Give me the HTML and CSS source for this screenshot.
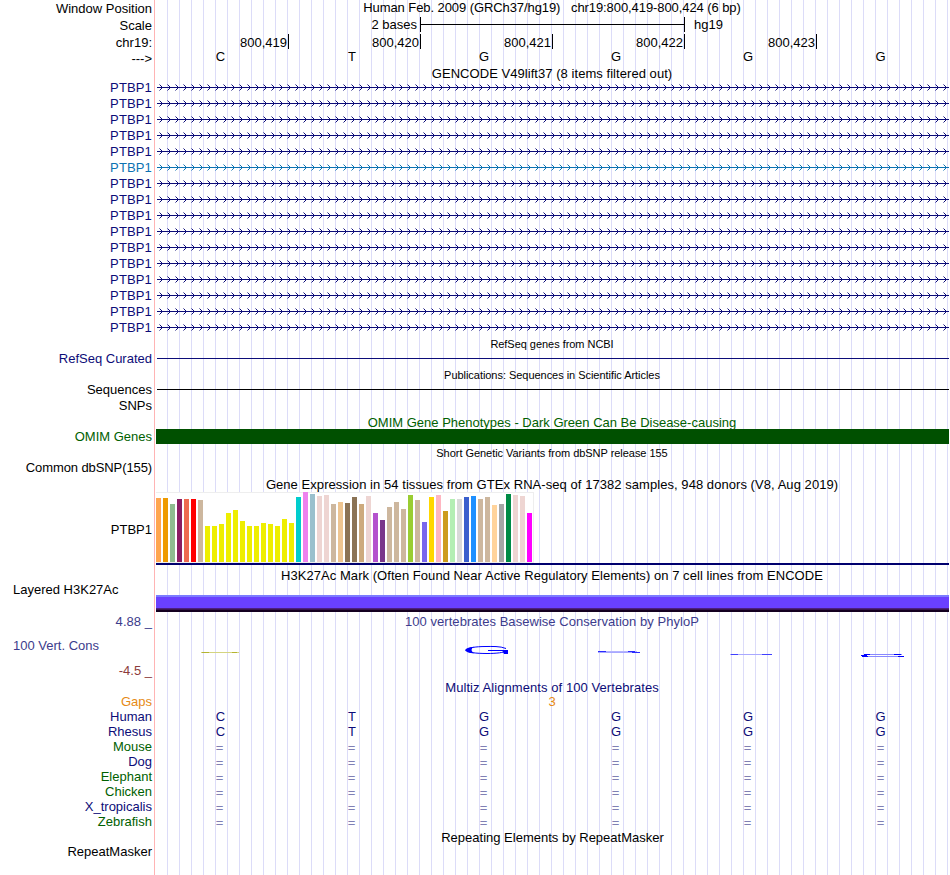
FILE: index.html
```html
<!DOCTYPE html>
<html lang="en">
<head>
    <meta charset="UTF-8">
    <title>Human hg19 chr19:800,419-800,424</title>
    <link rel="stylesheet" href="styles.css">
</head>
<body>

    <div class="browser">
        <div class="row position">
            <div class="label">Window Position</div>
            <div class="title">Human Feb. 2009 (GRCh37/hg19) &nbsp; chr19:800,419-800,424 (6 bp)</div>
        </div>
        <div class="row scale">
            <div class="label">Scale</div>
            <div class="track scale-track">
                <span class="scale-size">2 bases</span>
                <span class="scale-bar"></span>
                <span class="scale-db">hg19</span>
            </div>
        </div>
        <div class="row ruler">
            <div class="label">chr19:</div>
            <div class="track ticks">
                <span>800,419</span><span>800,420</span><span>800,421</span><span>800,422</span><span>800,423</span>
            </div>
        </div>
        <div class="row strand">
            <div class="label">---&gt;</div>
            <div class="track bases">
                <span>C</span><span>T</span><span>G</span><span>G</span><span>G</span><span>G</span>
            </div>
        </div>

        <div class="row gencode-title"><div class="title">GENCODE V49lift37 (8 items filtered out)</div></div>
        <div id="genes"></div>

        <div class="row"><div class="title small">RefSeq genes from NCBI</div></div>
        <div class="row line-row navy">
            <div class="label">RefSeq Curated</div>
            <div class="track"><div class="line"></div></div>
        </div>

        <div class="row"><div class="title small">Publications: Sequences in Scientific Articles</div></div>
        <div class="row line-row">
            <div class="label">Sequences</div>
            <div class="track"><div class="line"></div></div>
        </div>
        <div class="row snps"><div class="label">SNPs</div></div>

        <div class="row omim-title green"><div class="title">OMIM Gene Phenotypes - Dark Green Can Be Disease-causing</div></div>
        <div class="row omim green">
            <div class="label">OMIM Genes</div>
            <div class="track omim-bar"></div>
        </div>

        <div class="row"><div class="title small">Short Genetic Variants from dbSNP release 155</div></div>
        <div class="row dbsnp"><div class="label">Common dbSNP(155)</div></div>

        <div class="row gtex-title"><div class="title">Gene Expression in 54 tissues from GTEx RNA-seq of 17382 samples, 948 donors (V8, Aug 2019)</div></div>
        <div class="row gtex">
            <div class="label">PTBP1</div>
            <div class="track gtex-track"><div class="bars" id="bars"></div></div>
        </div>

        <div class="row h3k-title"><div class="title">H3K27Ac Mark (Often Found Near Active Regulatory Elements) on 7 cell lines from ENCODE</div></div>
        <div class="row h3k">
            <div class="label left">Layered H3K27Ac</div>
            <div class="track h3k-bar"></div>
        </div>

        <div class="row cons-title blue">
            <div class="label">4.88 _</div>
            <div class="title">100 vertebrates Basewise Conservation by PhyloP</div>
        </div>
        <div class="row cons">
            <div class="label cons-label">
                <span class="cons-name">100 Vert. Cons</span>
                <span class="cons-min">-4.5 _</span>
            </div>
            <div class="track">
                <svg class="logos" width="793" height="51" viewBox="156 629 793 51" fill="none">
                    <path d="M201 652.5H239" stroke="#d4d480"/>
                    <path d="M202 652.5H209M232 652.5H237" stroke="#b4b430"/>
                    <path d="M506 648.5C500 646 492 646.500 486 646.500C475 646.500 467 648 467 650.200C467 652.500 476 653.500 487 653.500C497 653.500 504 652.500 506 651" stroke="#00f"/>
                    <path d="M465 650.200Q466 647.500 474 646.800Q469 650 474 653.300Q466 652.600 465 650.200ZM502 650H508V654H504Z" fill="#00f"/>
                    <path d="M488 650.500H507" stroke="#00f"/>
                    <path d="M599 651.500H637" stroke="#b4b4ff"/>
                    <path d="M598 652.500H640" stroke="#a8a8ff"/>
                    <path d="M598 651.500H606M628 651.500H635M632 652.500H640" stroke="#2a2aff"/>
                    <path d="M730 654.500H772" stroke="#a8a8ff"/>
                    <path d="M731 654.500H738M762 654.500H772" stroke="#4040ff"/>
                    <path d="M864 654.500H902M863 656.500H903" stroke="#8888ff"/>
                    <path d="M861 655.500H867M862 656.500H868M864 654.500H870M894 654.500H901M898 656.500H904" stroke="#00f"/>
                </svg>
            </div>
        </div>

        <div class="row multiz-title navy"><div class="title">Multiz Alignments of 100 Vertebrates</div></div>
        <div class="row species gaps">
            <div class="label">Gaps</div>
            <div class="title">3</div>
        </div>
        <div id="species"></div>

        <div class="row repeat-title"><div class="title">Repeating Elements by RepeatMasker</div></div>
        <div class="row repeat"><div class="label">RepeatMasker</div></div>
    </div>

    <svg width="0" height="0" class="defs">
        <defs>
            <pattern id="chevrons-navy" class="navy" x="1" width="8" height="16" patternUnits="userSpaceOnUse">
                <path d="M4 7h1v1h-1zM4 9h1v1h-1zM3 6h1v1h-1zM3 10h1v1h-1z" fill="currentColor"/>
                <path d="M2 5h1v1h-1zM2 11h1v1h-1z" fill="currentColor" opacity=".5"/>
            </pattern>
            <pattern id="chevrons-lightblue" class="lightblue" x="1" width="8" height="16" patternUnits="userSpaceOnUse">
                <path d="M4 7h1v1h-1zM4 9h1v1h-1zM3 6h1v1h-1zM3 10h1v1h-1z" fill="currentColor"/>
                <path d="M2 5h1v1h-1zM2 11h1v1h-1z" fill="currentColor" opacity=".5"/>
            </pattern>
        </defs>
    </svg>

    <script>
        // GENCODE transcripts, one of them is non-coding (lighter blue)
        let genes = "";
        for (let i = 0; i < 16; i++) {
            const color = i === 5 ? "lightblue" : "navy";
            genes += `<div class="row gene ${color}">
                <div class="label">PTBP1</div>
                <svg class="track" width="793" height="16">
                    <rect x="1" y="8" width="792" height="1" fill="currentColor"/>
                    <rect x="1" width="792" height="16" fill="url(#chevrons-${color})"/>
                </svg>
            </div>`;
        }
        document.getElementById("genes").innerHTML = genes;

        // GTEx tissues: bar height, color
        const tissues = [
            [64, "#ffa54f"], [64, "#ee9a00"], [58, "#8fbc8f"], [63, "#8b1c62"], [63, "#ee6a50"], [63, "#ff0000"], [62, "#cdb79e"],
            [36, "#eeee00"], [36, "#eeee00"], [38, "#eeee00"], [49, "#eeee00"], [52, "#eeee00"], [41, "#eeee00"], [36, "#eeee00"],
            [36, "#eeee00"], [39, "#eeee00"], [38, "#eeee00"], [36, "#eeee00"], [43, "#eeee00"], [39, "#eeee00"],
            [65, "#00cdcd"], [70, "#ee82ee"], [68, "#9ac0cd"], [66, "#eed5d2"], [67, "#eed5d2"], [58, "#cdb79e"], [60, "#eec591"],
            [59, "#8b7355"], [65, "#8b7355"], [58, "#cdaa7d"], [66, "#eed5d2"], [49, "#b452cd"], [42, "#7a378b"], [55, "#cdb79e"],
            [60, "#cdb79e"], [53, "#cdb79e"], [67, "#9acd32"], [62, "#cdb79e"], [40, "#7a67ee"], [65, "#ffd700"], [67, "#ffb6c1"],
            [51, "#cd9b1d"], [63, "#b4eeb4"], [63, "#d9d9d9"], [65, "#3a5fcd"], [66, "#1e90ff"], [63, "#cdb79e"], [65, "#cdb79e"],
            [57, "#ffd39b"], [58, "#a6a6a6"], [68, "#008b45"], [67, "#eed5d2"], [66, "#eed5d2"], [49, "#ff00ff"]
        ];
        document.getElementById("bars").innerHTML = tissues
            .map(([h, c]) => `<i style="height:${h}px;background:${c}"></i>`).join("");

        const species = [
            ["Human", "navy"], ["Rhesus", "navy"], ["Mouse", "green"], ["Dog", "navy"],
            ["Elephant", "green"], ["Chicken", "green"], ["X_tropicalis", "navy"], ["Zebrafish", "green"]
        ];
        document.getElementById("species").innerHTML = species.map(([name, color], i) => {
            const bases = i < 2 ? "CTGGGG" : "======";
            return `<div class="row species ${color}">
                <div class="label">${name}</div>
                <div class="track bases ${i < 2 ? "match" : "gap"}">${[...bases].map(b => `<span>${b}</span>`).join("")}</div>
            </div>`;
        }).join("");
    </script>

</body>
</html>
```
FILE: styles.css
```css
body { margin: 0; background: #fff; font-family: "Liberation Sans", Arial, sans-serif; font-size: 13px; color: #000; }

/* guide lines every 12px, red line between labels and tracks */
.browser {
    width: 949px; height: 875px; overflow: hidden;
    background:
        linear-gradient(#ffb4b4, #ffb4b4) 154px 0 / 1px 100% no-repeat,
        repeating-linear-gradient(to right, transparent 0 11px, #dcdcf8 11px 12px) 156px 0 / 793px 100% no-repeat;
}
.defs { display: block; }

.row { display: grid; grid-template-columns: 152px 793px; column-gap: 4px; height: 16px; line-height: 16px; white-space: nowrap; }
.label { grid-column: 1; text-align: right; }
.label.left { text-align: left; padding-left: 13px; }
.title { grid-column: 2; text-align: center; padding-right: 1px; }
.track { grid-column: 2; display: block; }
.small { font-size: 11px; line-height: 18px; letter-spacing: -0.04px; }

.navy { color: #0c0c78; }
.lightblue { color: #0c72b2; }
.green { color: #006000; }
.blue { color: #3c3c8c; }

.position { line-height: 18px; }
.position .title { line-height: 16px; letter-spacing: -0.08px; }
.scale { height: 17px; line-height: 20px; }
.scale-track { display: flex; line-height: 15px; padding-top: 1px; }
.scale-size { width: 261px; padding-right: 3px; text-align: right; }
.scale-bar { width: 263px; height: 15px; border: solid #000; border-width: 0 1px; background: linear-gradient(#000, #000) 0 7px / 100% 1px no-repeat; }
.scale-db { padding-left: 9px; }
.ruler { height: 17px; line-height: 19px; }
.ticks { display: flex; padding-top: 1px; }
.ticks span { box-sizing: border-box; width: 132px; height: 15px; line-height: 18px; padding-right: 1px; text-align: right; border-right: 1px solid #000; }
.ticks span:first-child { width: 133px; }
.bases { display: grid; grid-template-columns: repeat(6, 132px); text-align: center; }
.bases span { padding-right: 4px; }
.bases span:first-child, .bases span:last-child { padding-right: 3px; }
.strand { line-height: 18px; }
.strand .bases { line-height: 13px; }

.gencode-title { height: 13px; line-height: 15px; letter-spacing: 0.05px; }
.gene { line-height: 18px; }
.gene .label { letter-spacing: 0.15px; }
.line-row { height: 15px; line-height: 15px; }
.line { height: 1px; margin: 7px 0 0 1px; background: currentColor; }
.snps { line-height: 18px; }

.omim-title { line-height: 19px; }
.omim { height: 15px; line-height: 15px; }
.omim-bar { background: #005000; }
.dbsnp .label { letter-spacing: -0.1px; }
.gtex-title { line-height: 17px; letter-spacing: 0.055px; }
.gtex { height: 73px; line-height: 76px; }
.gtex-track { box-sizing: border-box; height: 73px; border-bottom: 2px solid #00006e; }
.bars { box-sizing: border-box; display: flex; align-items: flex-end; gap: 2px; width: 378px; height: 71px; background: #fff; border: solid #eee; border-width: 1px 1px 1px 0; }
.bars i { flex: none; width: 5px; }

.h3k-title { height: 18px; line-height: 22px; letter-spacing: 0.05px; }
.h3k { height: 29px; line-height: 13px; }
.h3k-bar { margin-top: 12px; background: linear-gradient(#7c7cff 0 2px, #6a40ff 2px 13px, #4c2080 13px 14px, #3c1450 14px 15px, #140020 15px); }

.cons-title { height: 17px; line-height: 20px; letter-spacing: 0.04px; }
.cons { height: 51px; }
.cons-label { display: flex; flex-direction: column; line-height: 16px; padding-top: 9px; }
.cons-name { text-align: left; padding-left: 13px; color: #3c3c8c; }
.cons-min { margin-top: 9px; color: #8c3c3c; }
.logos { display: block; }

.multiz-title { height: 14px; line-height: 16px; letter-spacing: 0.07px; }
.species { height: 15px; line-height: 15px; }
.gaps { color: #e68a14; }
.gap { color: #8080b4; line-height: 17px; }
.gap span, .gap span:first-child { padding-right: 5px; }
.repeat-title { line-height: 17px; }
.repeat-title .title { padding-right: 0; }
.repeat { line-height: 14px; }

.match { color: #0c0c78; }
```
